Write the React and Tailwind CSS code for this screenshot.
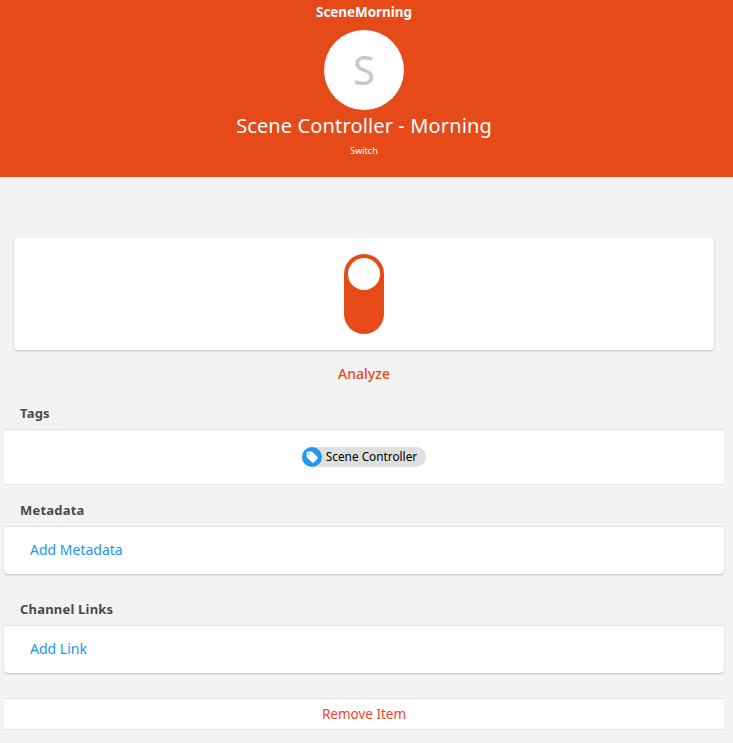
import React from 'react';

const font = { fontFamily: '"Noto Sans", sans-serif' };

const TagIcon = () => (
  <svg viewBox="0 0 20 20" className="size-5 shrink-0">
    <circle cx="10" cy="10" r="10" fill="#2196f3" />
    <path d="M4.6 6.2 C4.6 5.3 5.3 4.6 6.2 4.6 L9.4 4.6 C9.8 4.6 10.2 4.8 10.5 5.1 L15.2 9.8 C15.8 10.4 15.8 11.4 15.2 12 L12 15.2 C11.4 15.8 10.4 15.8 9.8 15.2 L5.1 10.5 C4.8 10.2 4.6 9.8 4.6 9.4 Z" fill="#fff" />
    <circle cx="6.8" cy="6.8" r="0.8" fill="#2196f3" />
  </svg>
);

const SectionTitle = ({ children, className }) => (
  <div className={`px-5 text-[13px] leading-5 font-bold text-[#4a4a4a] tracking-[0.2px] ${className}`}>{children}</div>
);

const LinkCard = ({ label }) => (
  <div className="mt-[6px] mx-1 h-[48px] pb-[2px] bg-white rounded-b-[4px] border-t border-[#e2e2e2] shadow-[0_1px_2px_rgba(0,0,0,0.22)] flex items-center px-[26px] text-sm text-[#2196f3]">
    {label}
  </div>
);

export default function App() {
  return (
    <div className="w-[733px] h-[743px] overflow-hidden bg-[#f3f3f3]" style={font}>
      <header className="h-[177px] bg-[#e64a19] pr-[5px] flex flex-col items-center text-white">
        <div className="h-[24px] pt-[2px] text-[13.4px] leading-5 font-bold">SceneMorning</div>
        <div className="mt-[6px] size-20 rounded-full bg-white flex items-center justify-center text-[40px] leading-none text-[#c8c8c8]">S</div>
        <div className="mt-[4px] text-xl leading-[24px] tracking-[0.13px]">Scene Controller - Morning</div>
        <div className="mt-[7px] text-[9px] leading-3">Switch</div>
      </header>

      <main className="w-[728px]">
        <section className="mt-[61px] mx-[14px] h-[112px] bg-white rounded-[4px] shadow-[0_1px_2px_rgba(0,0,0,0.2)] flex justify-center pt-4">
          <div className="w-10 h-20 rounded-[20px] bg-[#e64a19] pt-1 flex justify-center">
            <div className="size-8 rounded-full bg-white" />
          </div>
        </section>

        <div className="mt-[14px] text-center text-sm leading-5 font-medium text-[#e64a19]">Analyze</div>

        <SectionTitle className="mt-[19px]">Tags</SectionTitle>
        <div className="mt-[6px] mx-1 h-[56px] bg-white border-y border-[#e2e2e2] flex items-center justify-center">
          <div className="h-5 rounded-full bg-[#dfdfdf] flex items-center pr-[9px] gap-1 text-[11.8px] text-black">
            <TagIcon />
            Scene Controller
          </div>
        </div>

        <SectionTitle className="mt-[15px]">Metadata</SectionTitle>
        <LinkCard label="Add Metadata" />

        <SectionTitle className="mt-[25px]">Channel Links</SectionTitle>
        <LinkCard label="Add Link" />

        <div className="mt-[25px] mx-1 h-[32px] pt-px bg-white border-y border-[#e2e2e2] flex items-center justify-center text-[13.5px] text-[#ff3b30]">
          Remove Item
        </div>
      </main>
    </div>
  );
}
